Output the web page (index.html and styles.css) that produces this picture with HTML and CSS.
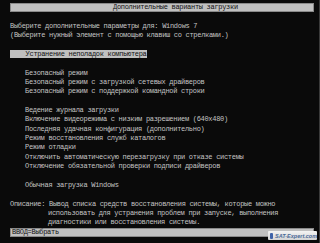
FILE: index.html
```html
<!DOCTYPE html>
<html lang="ru">
<head>
  <meta charset="UTF-8">
  <title>Дополнительные варианты загрузки</title>
  <link rel="stylesheet" href="styles.css">
</head>
<body>
  <div class="screen">
    <div class="row titlebar"><span class="title">Дополнительные варианты загрузки</span></div>
    <div class="row"></div>
    <div class="row">Выберите дополнительные параметры для: Windows 7</div>
    <div class="row">(Выберите нужный элемент с помощью клавиш со стрелками.)</div>
    <div class="row"></div>
    <div class="row"><span class="hl">    Устранение неполадок компьютера</span></div>
    <div class="row"></div>
    <div class="row ind">Безопасный режим</div>
    <div class="row ind">Безопасный режим с загрузкой сетевых драйверов</div>
    <div class="row ind">Безопасный режим с поддержкой командной строки</div>
    <div class="row"></div>
    <div class="row ind">Ведение журнала загрузки</div>
    <div class="row ind">Включение видеорежима с низким разрешением (640x480)</div>
    <div class="row ind">Последняя удачная конфигурация (дополнительно)</div>
    <div class="row ind">Режим восстановления служб каталогов</div>
    <div class="row ind">Режим отладки</div>
    <div class="row ind">Отключить автоматическую перезагрузку при отказе системы</div>
    <div class="row ind">Отключение обязательной проверки подписи драйверов</div>
    <div class="row"></div>
    <div class="row ind">Обычная загрузка Windows</div>
    <div class="row"></div>
    <div class="row">Описание: Вывод списка средств восстановления системы, которые можно</div>
    <div class="row desc">использовать для устранения проблем при запуске, выполнения</div>
    <div class="row desc">диагностики или восстановления системы.</div>
    <div class="row statusbar">ВВОД=Выбрать</div>
  </div>
  <div class="mark"><span class="mark-icon"></span>SAT-Expert.com</div>
</body>
</html>
```

FILE: styles.css
```css
html, body {
  margin: 0;
  padding: 0;
  background: #0a0a0a;
  height: 100%;
  overflow: hidden;
}
body {
  position: relative;
  border-right: 1px solid #3a3a3a;
  box-sizing: border-box;
}
.screen {
  display: flex;
  flex-direction: column;
  padding: 3px 5px 0 10px;
  color: #c4c4c4;
  font-family: "Liberation Mono", "DejaVu Sans Mono", monospace;
  font-size: 7px;
  letter-spacing: -0.3px;
  white-space: pre;
}
.row {
  height: 9.36px;
  line-height: 9.36px;
}
.titlebar, .statusbar {
  background: #c0c0c0;
  color: #111;
  box-shadow: inset 0 0 0 1px #8a8a8a;
}
.title {
  padding-left: 103px;
}
.statusbar {
  padding-left: 2px;
}
.hl {
  background: #c0c0c0;
  color: #111;
}
.ind {
  padding-left: 15px;
}
.desc {
  padding-left: 38px;
}
.mark {
  position: absolute;
  left: 268px;
  top: 231px;
  width: 49px;
  height: 9px;
  display: flex;
  align-items: center;
  gap: 2px;
  background: linear-gradient(#f4f4f4, #d4d4d4);
  border-radius: 1px;
  color: #4b6a98;
  font-family: "Liberation Sans", sans-serif;
  font-size: 5.5px;
  font-style: italic;
  font-weight: bold;
  white-space: nowrap;
  overflow: hidden;
}
.mark-icon {
  flex: none;
  width: 3px;
  height: 6px;
  margin-left: 2px;
  background: #3e62a8;
  border-radius: 1px;
}
```
